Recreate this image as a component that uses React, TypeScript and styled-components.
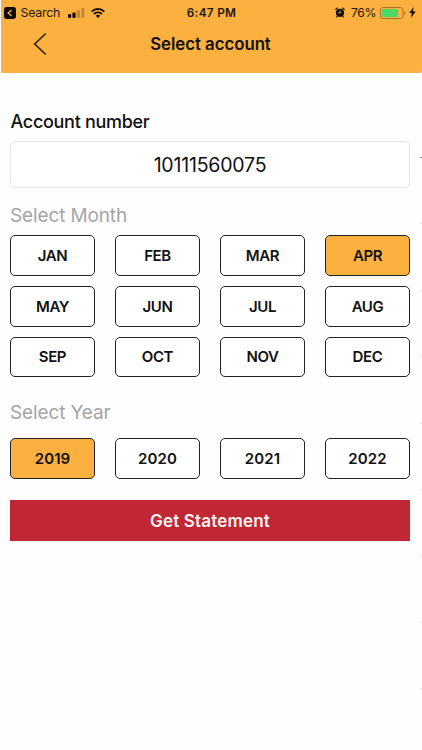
import React, { useState } from "react";
import styled, { createGlobalStyle } from "styled-components";

const AMBER = "#fbb040";

const GlobalStyle = createGlobalStyle`
  *, *::before, *::after { box-sizing: border-box; }
  body { margin: 0; background: #fefefe; font-family: Inter, "Liberation Sans", sans-serif; }
  button, input { font-family: inherit; color: inherit; margin: 0; padding: 0; }
`;

const Screen = styled.div`
  position: relative;
  width: 422px;
  height: 750px;
  overflow: hidden;
  background: #fefefe;
  color: #111;
`;

const Header = styled.header`
  margin-left: 1px;
  height: 73px;
  background: ${AMBER};
  border-bottom-right-radius: 2px;
`;

const StatusBar = styled.div`
  display: grid;
  grid-template-columns: 1fr auto 1fr;
  align-items: center;
  height: 25px;
  padding: 0 6px 0 3px;
  font-size: 12.5px;
  line-height: 16px;
  color: #24190a;
`;

const StatusGroup = styled.div<{ $end?: boolean }>`
  display: flex;
  align-items: center;
  justify-content: ${(p) => (p.$end ? "flex-end" : "flex-start")};
`;

const Carrier = styled.span`
  margin: 0 8px 0 4.5px;
  font-size: 12.3px;
  letter-spacing: -0.2px;
`;

const Clock = styled.span`
  font-weight: 600;
  font-size: 11.8px;
  letter-spacing: 0.3px;
  padding-left: 3px;
`;

const Percent = styled.span`
  margin: 0 4px 0 6px;
  font-size: 12.2px;
  letter-spacing: -0.45px;
`;

const NavBar = styled.div`
  display: grid;
  grid-template-columns: 77px 1fr 79px;
  align-items: center;
  height: 37px;
`;

const BackButton = styled.button`
  display: flex;
  justify-content: center;
  border: 0;
  background: none;
`;

const Title = styled.h1`
  margin: 0;
  text-align: center;
  font-size: 16.8px;
  font-weight: 600;
  line-height: 20px;
  letter-spacing: -0.03px;
`;

const Form = styled.main`
  display: flex;
  flex-direction: column;
  padding: 38px 12px 0 10px;
`;

const FieldLabel = styled.label`
  height: 30px;
  padding-left: 0.5px;
  font-size: 18px;
  line-height: 22px;
  font-weight: 500;
  letter-spacing: -0.3px;
`;

const AccountInput = styled.input`
  width: 400px;
  height: 47px;
  border: 1px solid #e6e6e6;
  border-radius: 5px;
  background: #fff;
  text-align: center;
  font-size: 19.5px;
  letter-spacing: -0.2px;
  outline: none;
`;

const SectionTitle = styled.h2<{ $top: number; $bottom: number }>`
  margin: ${(p) => p.$top}px 0 ${(p) => p.$bottom}px;
  font-size: 19px;
  line-height: 24px;
  font-weight: 400;
  letter-spacing: -0.13px;
  color: #a5a5a5;
`;

const OptionGrid = styled.div`
  display: grid;
  grid-template-columns: repeat(4, 85px);
  justify-content: space-between;
  row-gap: 10px;
  width: 400px;
`;

const Option = styled.button<{ $selected: boolean; $wide?: boolean }>`
  height: 40.75px;
  border: 1.3px solid #222;
  border-radius: 5px;
  background: ${(p) => (p.$selected ? AMBER : "#fff")};
  font-size: 15px;
  font-weight: 600;
  letter-spacing: ${(p) => (p.$wide ? "0.1px" : "-0.4px")};
`;

const SubmitButton = styled.button`
  width: 400px;
  height: 41px;
  margin-top: 21px;
  border: 0;
  background: #c02633;
  color: #fff5f5;
  font-size: 17px;
  font-weight: 600;
  letter-spacing: 0.18px;
`;

const EdgeTicks = styled.div`
  position: absolute;
  top: 157px;
  right: 0;
  display: flex;
  flex-direction: column;
  gap: 65.4px;
`;

const Tick = styled.i<{ $dark: boolean }>`
  width: 2px;
  height: 1px;
  background: ${(p) => (p.$dark ? "#888" : "#e6e6e6")};
`;

const months = ["JAN", "FEB", "MAR", "APR", "MAY", "JUN", "JUL", "AUG", "SEP", "OCT", "NOV", "DEC"];
const years = ["2019", "2020", "2021", "2022"];

const ReturnIcon = () => (
  <svg width="12" height="12" viewBox="0 0 12 12">
    <rect width="12" height="12" rx="2.4" fill="#0c0803" />
    <path d="M7.5 3 4.2 6l3.3 3" fill="none" stroke="#eba53c" strokeWidth="1.5" />
  </svg>
);

const SignalIcon = () => (
  <svg width="17" height="10" viewBox="0 0 17 10">
    <rect x="0" y="6" width="3.2" height="4" rx=".7" fill="#1a1004" />
    <rect x="4.4" y="4.4" width="3.2" height="5.6" rx=".7" fill="#1a1004" />
    <rect x="8.8" y="2.3" width="3.2" height="7.7" rx=".7" fill="#c38a36" />
    <rect x="13.2" y="0" width="3.2" height="10" rx=".7" fill="#c38a36" />
  </svg>
);

const WifiIcon = () => (
  <svg width="14" height="10" viewBox="0 0 14 10">
    <g fill="none" stroke="#140c02" strokeWidth="1.9">
      <path d="M.7 3.6a9 9 0 0 1 12.6 0" />
      <path d="M3 6a5.7 5.7 0 0 1 8 0" />
    </g>
    <path d="M4.8 7.8a3.2 3.2 0 0 1 4.4 0L7 10z" fill="#140c02" />
  </svg>
);

const AlarmIcon = () => (
  <svg width="10" height="11" viewBox="0 0 10 11">
    <circle cx="5" cy="5.8" r="4.1" fill="#140c02" />
    <path d="M.7 2.4 2.3 1M9.3 2.4 7.7 1M2.3 9.2l-.6.8M7.7 9.2l.6.800" stroke="#140c02" strokeWidth="1.1" strokeLinecap="round" />
    <path d="M5.200 3.500v2.500H3.200" fill="none" stroke={AMBER} strokeWidth=".9" />
  </svg>
);

const BatteryIcon = () => (
  <svg width="26" height="12" viewBox="0 0 26 12">
    <rect x=".5" y=".5" width="22.6" height="11" rx="2.6" fill="none" stroke="#a57227" />
    <rect x="2" y="2" width="16" height="8" rx="1" fill="#4cd964" />
    <path d="M24.4 4.2c1.5.6 1.5 3 0 3.6z" fill="#a57227" />
  </svg>
);

const BoltIcon = () => (
  <svg width="7" height="11" viewBox="0 0 7 11">
    <path d="M4.6 0 .3 6h2.6L1.8 11 6.7 4.5H4z" fill="#140c02" />
  </svg>
);

const BackIcon = () => (
  <svg width="14" height="24" viewBox="0 0 14 24">
    <path d="M12.8 1.5 1.7 12l11.1 10.5" fill="none" stroke="#2b1d08" strokeWidth="1.6" />
  </svg>
);

const IconSlot = styled.span<{ $gap: number }>`
  display: flex;
  margin-left: ${(p) => p.$gap}px;
`;

export default function App() {
  const [month, setMonth] = useState("APR");
  const [year, setYear] = useState("2019");

  return (
    <Screen>
      <GlobalStyle />
      <Header>
        <StatusBar>
          <StatusGroup>
            <ReturnIcon />
            <Carrier>Search</Carrier>
            <SignalIcon />
            <IconSlot $gap={6}><WifiIcon /></IconSlot>
          </StatusGroup>
          <Clock>6:47 PM</Clock>
          <StatusGroup $end>
            <AlarmIcon />
            <Percent>76%</Percent>
            <BatteryIcon />
            <IconSlot $gap={3}><BoltIcon /></IconSlot>
          </StatusGroup>
        </StatusBar>
        <NavBar>
          <BackButton aria-label="Back"><BackIcon /></BackButton>
          <Title>Select account</Title>
        </NavBar>
      </Header>
      <Form>
        <FieldLabel htmlFor="account">Account number</FieldLabel>
        <AccountInput id="account" readOnly value="10111560075" />
        <SectionTitle $top={16} $bottom={7}>Select Month</SectionTitle>
        <OptionGrid>
          {months.map((m) => (
            <Option key={m} $selected={m === month} onClick={() => setMonth(m)}>{m}</Option>
          ))}
        </OptionGrid>
        <SectionTitle $top={24} $bottom={13}>Select Year</SectionTitle>
        <OptionGrid>
          {years.map((y) => (
            <Option key={y} $wide $selected={y === year} onClick={() => setYear(y)}>{y}</Option>
          ))}
        </OptionGrid>
        <SubmitButton>Get Statement</SubmitButton>
      </Form>
      <EdgeTicks>
        {Array.from({ length: 9 }, (_, i) => <Tick key={i} $dark={i === 0} />)}
      </EdgeTicks>
    </Screen>
  );
}
